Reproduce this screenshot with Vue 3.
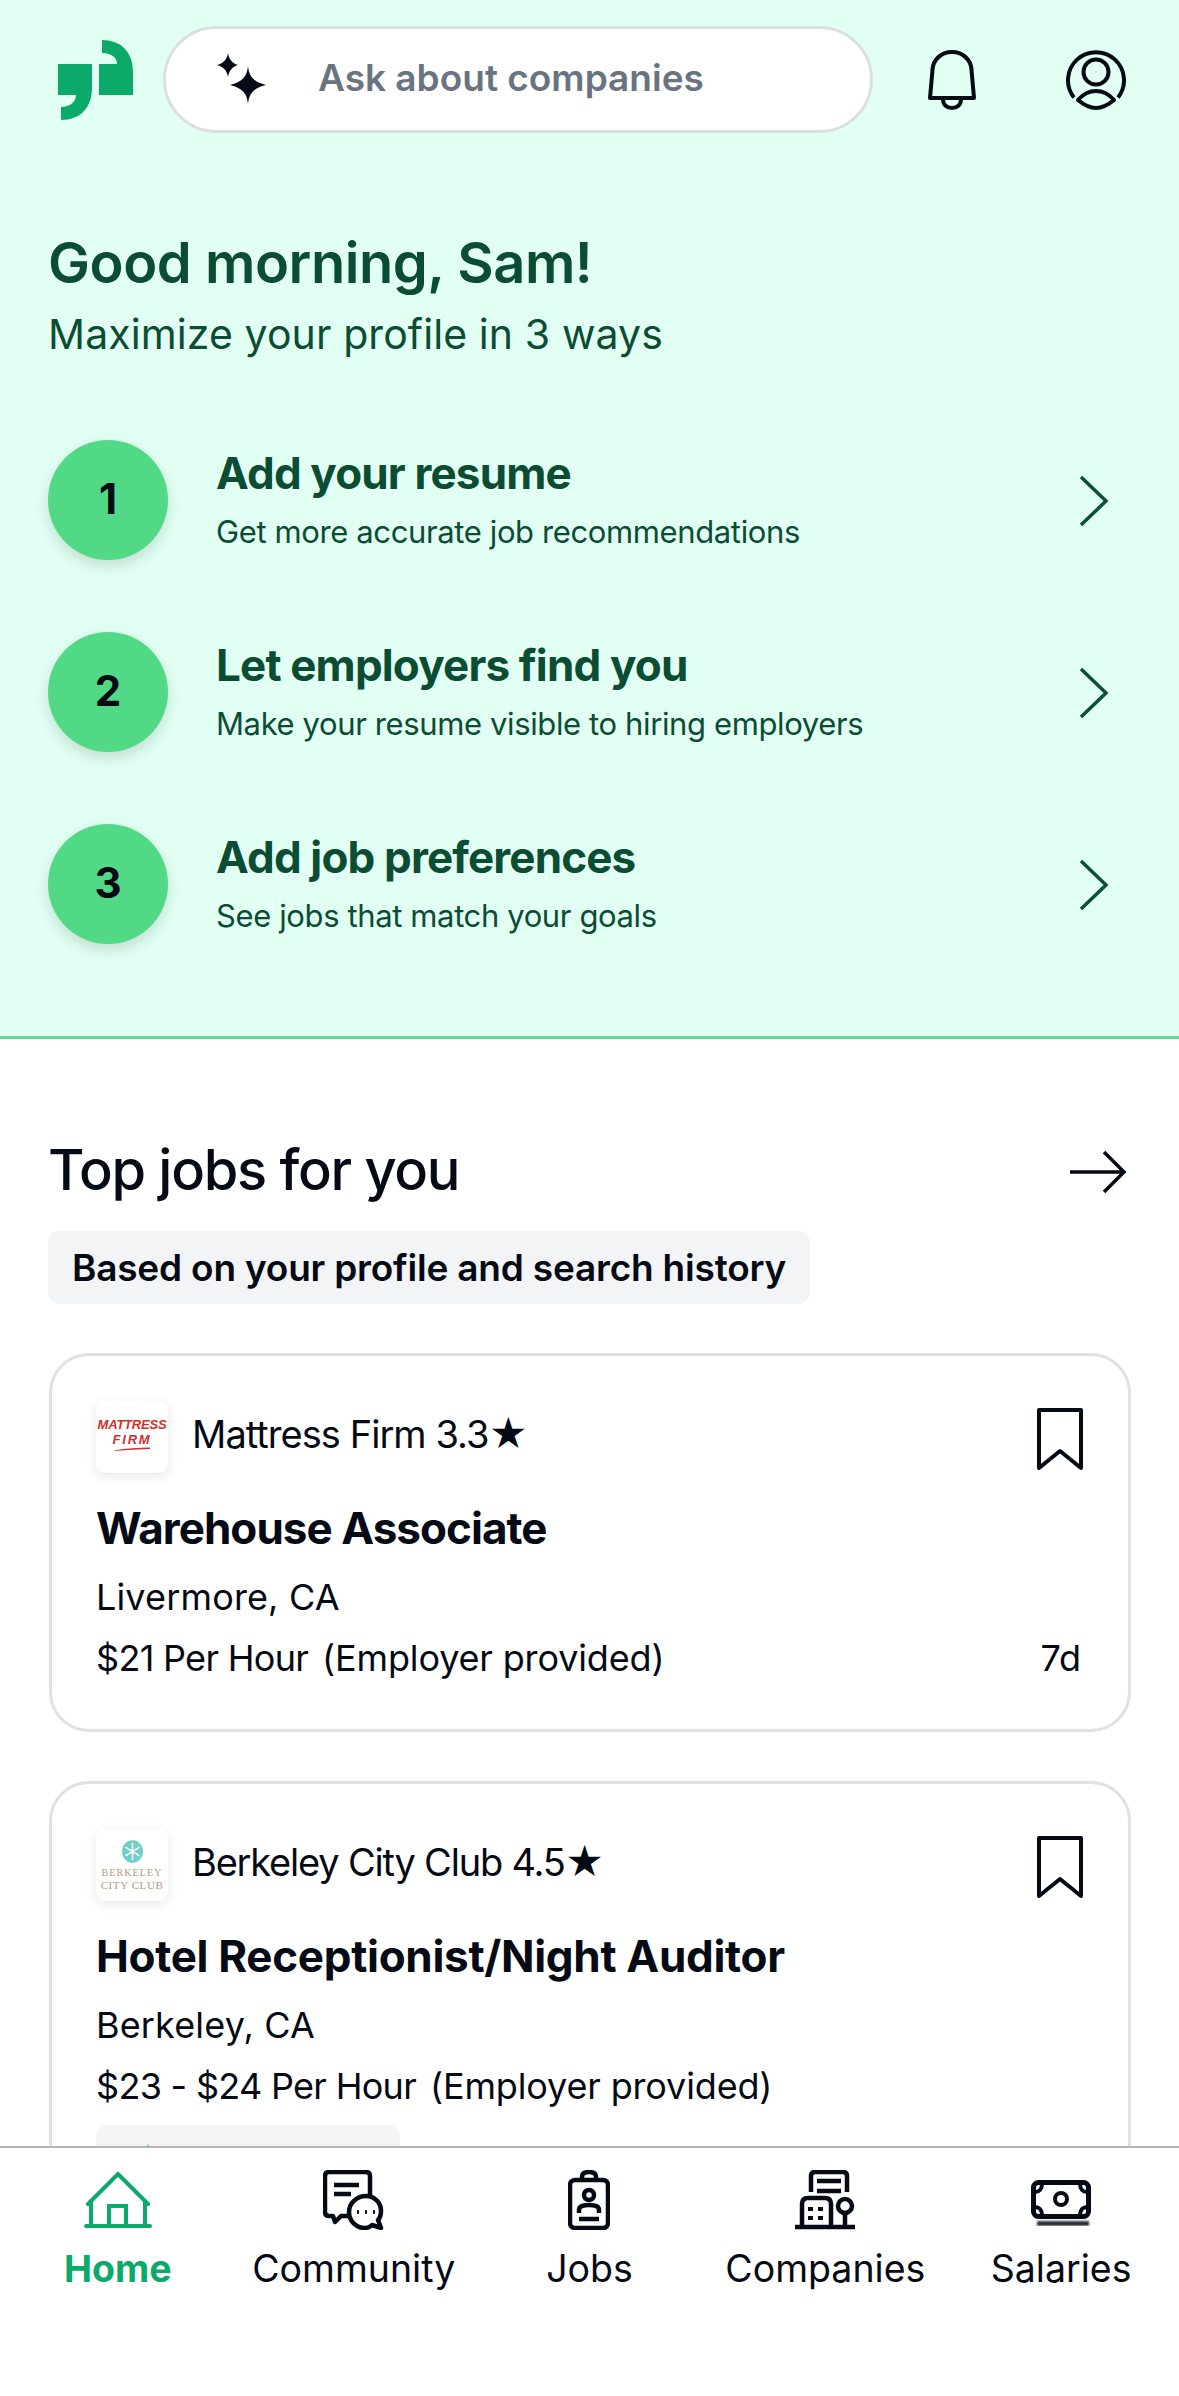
<template>
  <div class="screen">
    <section class="hero">
      <div class="topbar">
        <svg class="logo" viewBox="0 0 75 80" width="75" height="80">
          <path fill="#0caa6a" d="M0 24H34V48C34 68 22 80 3 80V67C12 67 18 62 18 55H0Z" />
          <path fill="#0caa6a" d="M44 0C63 0 75 12 75 32V55H41V24H59C59 17 53 13 44 13Z" />
        </svg>
        <div class="search">
          <svg class="sparkle" viewBox="0 0 50 54" width="50" height="54">
            <path fill="#050a14" d="M12 0C13 6 16 10 22 12C16 14 13 18 12 24C11 18 8 14 1 12C8 10 11 6 12 0Z" />
            <path fill="#050a14" d="M32 13C33 24 38 29 50 32C38 35 33 40 32 51C31 40 26 35 14 32C26 29 31 24 32 13Z" />
          </svg>
          <span>Ask about companies</span>
        </div>
        <svg class="bell" viewBox="0 0 48 60" width="48" height="60" fill="none" stroke="#050a14" stroke-width="4" stroke-linejoin="round">
          <path d="M2 48H46L43.500 20C43 9 34 2 24 2C14 2 5 9 4.500 20Z" />
          <path d="M15 49C15 55 19 58 24 58C29 58 33 55 33 49" />
        </svg>
        <svg class="person" viewBox="0 0 60 60" width="60" height="60" fill="none" stroke="#050a14" stroke-width="4" stroke-linejoin="round">
          <path d="M8 47.500A28 28 0 1 1 52 47.500" />
          <circle cx="30" cy="22" r="12.500" />
          <path d="M12 50C18 43 24 41 30 41C36 41 42 43 48 50C42 55 36 58 30 58C24 58 18 55 12 50Z" />
        </svg>
      </div>

      <h1>Good morning, Sam!</h1>
      <p class="lead">Maximize your profile in 3 ways</p>

      <div class="steps">
        <div class="step" v-for="(s, i) in steps" :key="s.title">
          <div class="num">{{ i + 1 }}</div>
          <div class="step-text">
            <div class="step-title">{{ s.title }}</div>
            <div class="step-sub">{{ s.sub }}</div>
          </div>
          <svg class="chev" viewBox="0 0 30 52" width="30" height="52" fill="none" stroke="#0b4f35" stroke-width="3.500">
            <path d="M2 2L27 26L2 50" />
          </svg>
        </div>
      </div>
    </section>

    <main class="jobs">
      <div class="jobs-head">
        <h2>Top jobs for you</h2>
        <svg class="go" viewBox="0 0 56 44" width="56" height="44" fill="none" stroke="#050a14" stroke-width="3.500">
          <path d="M0 22H54M34 2L54 22L34 42" />
        </svg>
      </div>
      <div class="based">Based on your profile and search history</div>

      <article class="card" :class="job.logo" v-for="job in jobs" :key="job.title">
        <div class="card-head">
          <div class="co-logo">
            <div v-if="job.logo === 'mattress'" class="mf">
              <span class="mf-1">MATTRESS</span>
              <span class="mf-2">FIRM</span>
              <svg viewBox="0 0 36 4" width="36" height="4">
                <path d="M0 3.500C12 1 24 1 36 0.500V2C24 2.500 12 3 0 4Z" fill="#d0302b" />
              </svg>
            </div>
            <div v-else class="bcc">
              <svg viewBox="0 0 24 26" width="21" height="23">
                <ellipse cx="12" cy="13" rx="12" ry="13" fill="#6fcfca" />
                <path d="M12 3V23M4 8L20 18M20 8L4 18" stroke="#fff" stroke-width="1.800" />
              </svg>
              <span class="bcc-1">BERKELEY</span>
              <span class="bcc-2">CITY CLUB</span>
            </div>
          </div>
          <div class="co-name">{{ job.company }} {{ job.rating }}★</div>
          <svg class="mark" viewBox="0 0 46 63" width="46" height="63" fill="none" stroke="#050a14" stroke-width="4" stroke-linejoin="round">
            <path d="M2 2H44V60L23 43L2 60Z" />
          </svg>
        </div>
        <div class="job-title">{{ job.title }}</div>
        <div class="line place">{{ job.place }}</div>
        <div class="line pay">
          <span class="amount">{{ job.pay }}</span>
          <span class="source">(Employer provided)</span>
          <span v-if="job.age" class="age">{{ job.age }}</span>
        </div>
        <div v-if="job.badge" class="badge">
          <svg viewBox="0 0 30 30" width="30" height="30"><path fill="#0caa6a" d="M15 0L19 11L30 15L19 19L15 30L11 19L0 15L11 11Z" /></svg>
        </div>
      </article>
    </main>

    <nav class="tabs">
      <div class="tab active">
        <div class="tab-icon">
          <svg viewBox="0 0 68 56" width="68" height="56" fill="none" stroke="#0caa6a" stroke-width="4" stroke-linecap="round">
            <path d="M4 32L34 2L64 32M7 30V54M61 30V54M2 54H66M25 54V34H42V54" />
          </svg>
        </div>
        <span>Home</span>
      </div>
      <div class="tab">
        <div class="tab-icon">
          <svg viewBox="0 0 61 60" width="61" height="60" fill="none" stroke="#050a14" stroke-width="4.500" stroke-linejoin="round">
            <path d="M25 46H18L12 52L10 46H6C3.500 46 2 44.500 2 42V6C2 3.500 3.500 2 6 2H43C45.500 2 47 3.500 47 6V25" />
            <path d="M11 15H36M11 24H28" />
            <path d="M43 26C52 26 58 33 58 41C58 45 57 48 55 50L58 58L49 55C47 57 45 58 42 58C33 58 26 51 26 42C26 33 34 26 43 26Z" />
            <path d="M34 42H36M42 42H44M50 42H52" stroke-width="3.500" />
          </svg>
        </div>
        <span>Community</span>
      </div>
      <div class="tab">
        <div class="tab-icon">
          <svg viewBox="0 0 42 60" width="42" height="60" fill="none" stroke="#050a14" stroke-width="4.500">
            <rect x="2" y="10" width="38" height="48" rx="5" />
            <path d="M14 10V7C14 3 17 2 21 2C25 2 28 3 28 7V10" />
            <circle cx="21" cy="25" r="5" />
            <path d="M11 43V40C11 37 14 35 21 35C28 35 31 37 31 40V43M11 49H31" />
          </svg>
        </div>
        <span>Jobs</span>
      </div>
      <div class="tab">
        <div class="tab-icon">
          <svg viewBox="0 0 60 60" width="60" height="60" fill="none" stroke="#050a14" stroke-width="4.500">
            <path d="M16 22V6C16 3.500 17.500 2 20 2H48C50.500 2 52 3.500 52 6V22M22 11H46M22 21H46" />
            <path d="M7 56V34C7 30 9 28 13 28H30C34 28 36 30 36 34V56" />
            <path d="M0 57H60M50 42V57" />
            <circle cx="50" cy="36" r="7" />
            <path d="M13 39H18M23 39H28M13 48H18M23 48H28" stroke-width="4" />
          </svg>
        </div>
        <span>Companies</span>
      </div>
      <div class="tab">
        <div class="tab-icon cash">
          <svg viewBox="0 0 60 46" width="60" height="46" fill="none" stroke="#050a14" stroke-width="5">
            <rect x="2.500" y="2.500" width="55" height="34" rx="5" />
            <circle cx="30" cy="19" r="6" stroke-width="4" />
            <path d="M4 12C8 12 11 9 11 4M56 12C52 12 49 9 49 4M4 27C8 27 11 30 11 35M56 27C52 27 49 30 49 35" stroke-width="4" />
            <path class="under" d="M6 43.500H58" stroke="#2b2f36" stroke-width="5" />
          </svg>
        </div>
        <span>Salaries</span>
      </div>
    </nav>
  </div>
</template>

<script setup>
const steps = [
  { title: 'Add your resume', sub: 'Get more accurate job recommendations' },
  { title: 'Let employers find you', sub: 'Make your resume visible to hiring employers' },
  { title: 'Add job preferences', sub: 'See jobs that match your goals' },
]

const jobs = [
  {
    logo: 'mattress',
    company: 'Mattress Firm',
    rating: '3.3',
    title: 'Warehouse Associate',
    place: 'Livermore, CA',
    pay: '$21 Per Hour',
    age: '7d',
  },
  {
    logo: 'bcc-card',
    company: 'Berkeley City Club',
    rating: '4.5',
    title: 'Hotel Receptionist/Night Auditor',
    place: 'Berkeley, CA',
    pay: '$23 - $24 Per Hour',
    badge: true,
  },
]
</script>

<style>
html, body {
  margin: 0;
  background: #fff;
}
</style>

<style scoped>
.screen {
  width: 1179px;
  height: 2396px;
  display: flex;
  flex-direction: column;
  overflow: hidden;
  font-family: Inter, "Liberation Sans", sans-serif;
  color: #050a14;
  background: #fff;
}

.hero {
  flex: none;
  height: 1039px;
  box-sizing: border-box;
  background: #e2fff3;
  border-bottom: 3px solid #62d892;
  color: #0a4d33;
}

.topbar {
  display: flex;
  align-items: center;
  padding: 26px 0 0 58px;
}

.search {
  margin-left: 30px;
  width: 710px;
  height: 107px;
  box-sizing: border-box;
  background: #fff;
  border: 3px solid #dcdfe2;
  border-radius: 54px;
  display: flex;
  align-items: center;
  padding-left: 50px;
  font-size: 37px;
  font-weight: 600;
  color: #6a7480;
}

.search span {
  margin-left: 52px;
  margin-top: -5px;
}

.bell {
  margin-left: 55px;
}

.person {
  margin-left: 90px;
}

h1 {
  margin: 95px 0 0 48px;
  font-size: 56px;
  line-height: 70px;
  font-weight: 600;
  letter-spacing: -0.450px;
}

.lead {
  margin: 11px 0 0 48px;
  font-size: 41px;
  line-height: 50px;
  letter-spacing: 0.100px;
}

.steps {
  margin: 81px 0 0 48px;
  display: flex;
  flex-direction: column;
  gap: 72px;
}

.step {
  display: flex;
  align-items: center;
  height: 120px;
}

.num {
  width: 120px;
  height: 120px;
  box-sizing: border-box;
  padding-bottom: 4px;
  border-radius: 50%;
  background: #52d985;
  box-shadow: 0 6px 14px rgba(40, 90, 60, 0.18);
  display: flex;
  align-items: center;
  justify-content: center;
  font-size: 42px;
  font-weight: 700;
  color: #050a14;
  flex: none;
}

.step-text {
  margin-left: 48px;
  flex: 1;
}

.step-title {
  font-size: 44px;
  line-height: 56px;
  font-weight: 700;
  margin-top: -4px;
  letter-spacing: -0.850px;
}

.step-sub {
  font-size: 31px;
  line-height: 40px;
  margin-top: 11px;
  letter-spacing: -0.380px;
}

.chev {
  margin-right: 70px;
  margin-top: 2px;
}

.jobs {
  flex: 1;
  min-height: 0;
  overflow: hidden;
  padding: 96px 48px 0 49px;
}

.jobs-head {
  display: flex;
  align-items: center;
  justify-content: space-between;
  padding-right: 5px;
}

.go {
  margin-top: 4px;
}

h2 {
  margin: 0 0 0 -1px;
  font-size: 56px;
  line-height: 70px;
  font-weight: 500;
  letter-spacing: -1.300px;
}

.based {
  display: inline-block;
  margin: 26px 0 49px -1px;
  padding: 0 24px;
  height: 73px;
  line-height: 73px;
  background: #f3f4f6;
  border-radius: 12px;
  font-size: 37px;
  font-weight: 600;
  letter-spacing: -0.200px;
  vertical-align: top;
}

.card {
  box-sizing: border-box;
  border: 3px solid #dfe1e5;
  border-radius: 40px;
  padding: 45px 47px 48px 44px;
  margin-bottom: 49px;
}

.card-head {
  display: flex;
  align-items: center;
  height: 72px;
}

.co-logo {
  width: 72px;
  height: 72px;
  flex: none;
  border-radius: 9px;
  background: #fff;
  box-shadow: 0 3px 12px rgba(0, 0, 0, 0.1);
  display: flex;
  align-items: center;
  justify-content: center;
  overflow: hidden;
}

.mf {
  display: flex;
  flex-direction: column;
  align-items: center;
  color: #d0302b;
  font-family: "Liberation Sans", sans-serif;
  font-style: italic;
  font-weight: 700;
  font-size: 13px;
  line-height: 15px;
  margin-top: -6px;
}

.mf-1 {
  letter-spacing: -0.200px;
}

.mf-2 {
  letter-spacing: 1.800px;
}

.bcc {
  display: flex;
  flex-direction: column;
  align-items: center;
  font-family: "Liberation Serif", serif;
  color: #b59a84;
}

.bcc svg {
  margin-bottom: 4px;
}

.bcc-1,
.bcc-2 {
  line-height: 12px;
  white-space: nowrap;
}

.bcc-1 {
  font-size: 10px;
  letter-spacing: 1.100px;
}

.bcc-2 {
  font-size: 11px;
  letter-spacing: 0.600px;
}

.co-name {
  margin-left: 24px;
  font-size: 38px;
  margin-top: -6px;
  letter-spacing: -0.950px;
}

.bcc-card .co-name {
  letter-spacing: -1.200px;
}

.mark {
  margin-left: auto;
  margin-right: -2px;
  margin-top: 4px;
}

.job-title {
  margin-top: 27px;
  font-size: 44px;
  line-height: 56px;
  font-weight: 700;
  letter-spacing: -0.950px;
}

.bcc-card .job-title {
  letter-spacing: -0.300px;
}

.line {
  margin-top: 15px;
  font-size: 36px;
  line-height: 46px;
}

.place {
  margin-top: 18px;
  letter-spacing: 0.150px;
}

.pay {
  display: flex;
}

.amount {
  letter-spacing: -0.700px;
}

.source {
  margin-left: 14px;
  letter-spacing: -0.150px;
}

.age {
  margin-left: auto;
}

.badge {
  margin-top: 16px;
  width: 304px;
  height: 60px;
  background: #f3f4f6;
  border-radius: 12px;
  padding: 19px 0 0 37px;
  box-sizing: border-box;
}

.tabs {
  flex: none;
  height: 250px;
  box-sizing: border-box;
  background: #fff;
  border-top: 2px solid #b5b5b5;
  display: grid;
  grid-template-columns: repeat(5, 1fr);
  padding-top: 22px;
}

.tab {
  display: flex;
  flex-direction: column;
  align-items: center;
  font-size: 37.500px;
  line-height: 46px;
}

.tab-icon {
  height: 60px;
  margin-bottom: 16px;
  display: flex;
  align-items: center;
}

.cash {
  align-items: flex-start;
  padding-top: 10px;
  box-sizing: border-box;
}

.under {
  filter: blur(0.8px);
}

.active {
  color: #0caa6a;
  font-weight: 700;
}
</style>
